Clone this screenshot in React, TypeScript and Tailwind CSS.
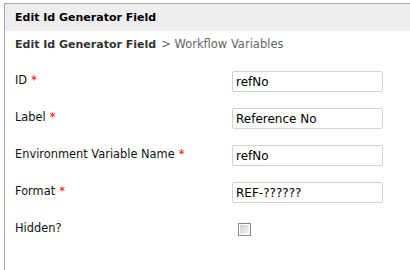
const fields = [
  { label: 'ID', value: 'refNo', required: true },
  { label: 'Label', value: 'Reference No', required: true },
  { label: 'Environment Variable Name', value: 'refNo', required: true },
  { label: 'Format', value: 'REF-??????', required: true },
];

function Checkbox() {
  return (
    <span className="block w-[13px] h-[13px] border border-[#8a8a8a] bg-white p-px">
      <span className="block w-full h-full bg-gradient-to-br from-[#cfcfcf] to-[#f7f7f7]" />
    </span>
  );
}

export default function App() {
  return (
    <div className="w-[410px] h-[270px] bg-white pt-[3px] pl-[4px] font-['DejaVu_Sans',sans-serif] text-[11.4px] text-[#111]">
      <div className="h-[267px] border-l border-t border-[#a9a9a9]">
        <div className="h-[27px] bg-[#eeeeee] flex items-center pt-[2px] px-[10px] font-bold text-[11px] text-black">
          Edit Id Generator Field
        </div>
        <div className="h-[26px] flex items-center pt-[2px] px-[10px]">
          <span className="font-bold text-[11px] text-[#333]">Edit Id Generator Field</span>
          <span className="ml-[5px] text-[11.5px] text-[#666]">&gt; Workflow Variables</span>
        </div>
        <div className="flex flex-col gap-[16px] pt-[14px] pl-[10px]">
          {fields.map((f) => (
            <div key={f.label} className="grid grid-cols-[217px_151px] h-[21px] items-center">
              <div className="-mt-[1px]">
                {f.label}
                {f.required && <span className="ml-[4px] text-[#ff0000]">*</span>}
              </div>
              <input
                readOnly
                value={f.value}
                className="h-[21px] w-[151px] border border-[#cfd3d8] rounded-[2px] px-[3px] text-[12px] text-black outline-none font-['DejaVu_Sans',sans-serif]"
              />
            </div>
          ))}
          <div className="grid grid-cols-[217px_151px] h-[21px] items-center">
            <div className="-mt-[1px]">Hidden?</div>
            <div className="pl-[6px]">
              <Checkbox />
            </div>
          </div>
        </div>
      </div>
    </div>
  );
}
